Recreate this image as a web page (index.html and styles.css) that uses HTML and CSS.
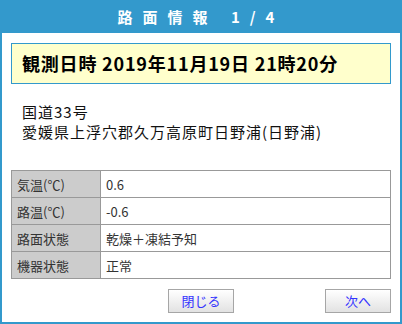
FILE: index.html
```html
<!DOCTYPE html>
<html lang="ja">
<head>
<meta charset="utf-8">
<link rel="stylesheet" href="styles.css">
</head>
<body>
<div class="panel">
  <div class="title">路面情報 1/4</div>
  <div class="content">
    <div class="obs">観測日時 2019年11月19日 21時20分</div>
    <div class="addr">国道33号<br>愛媛県上浮穴郡久万高原町日野浦(日野浦)</div>
    <table class="data">
      <tr><th>気温(℃)</th><td>0.6</td></tr>
      <tr><th>路温(℃)</th><td>-0.6</td></tr>
      <tr><th>路面状態</th><td>乾燥＋凍結予知</td></tr>
      <tr><th>機器状態</th><td>正常</td></tr>
    </table>
    <div class="actions">
      <button class="btn btn-close">閉じる</button>
      <button class="btn btn-next">次へ</button>
    </div>
  </div>
</div>
</body>
</html>
```
FILE: styles.css
```css
html, body {
  margin: 0;
  padding: 0;
  background: #fff;
}
body {
  font-family: "Noto Sans CJK JP", "Noto Sans", sans-serif;
  color: #000;
}
.panel {
  width: 402px;
  height: 324px;
  box-sizing: border-box;
  border: 2px solid #3399cc;
  border-top: 0;
  display: flex;
  flex-direction: column;
}
.title {
  height: 33px;
  margin: 0 -2px;
  background: #3399cc;
  color: #fff;
  font-weight: bold;
  font-size: 15px;
  letter-spacing: 10px;
  line-height: 33px;
  text-align: center;
}
.content {
  padding: 10px 9px 0 9px;
  display: flex;
  flex-direction: column;
}
.obs {
  height: 39px;
  border: 1px solid #3399cc;
  background: #ffffcc;
  font-size: 18px;
  font-weight: bold;
  letter-spacing: 0.8px;
  line-height: 39px;
  padding-left: 10px;
}
.addr {
  margin-top: 18px;
  padding-left: 11px;
  font-size: 15px;
  letter-spacing: 1px;
  line-height: 20px;
  color: #111;
}
.data {
  margin-top: 28px;
  width: 100%;
  border-collapse: collapse;
  font-size: 13px;
  color: #333;
}
.data th, .data td {
  border: 1px solid #999;
  height: 26px;
  padding: 0 0 0 5px;
  text-align: left;
  font-weight: normal;
}
.data th {
  width: 83px;
  background: #cccccc;
}
.data td {
  background: #fff;
}
.actions {
  margin-top: 10px;
  display: grid;
  grid-template-columns: 1fr auto 1fr;
  align-items: center;
}
.btn {
  width: 66px;
  height: 24px;
  border: 1px solid #a6a6a6;
  background: linear-gradient(#ffffff, #e2e2e2);
  color: #3333ff;
  font-family: "Noto Sans CJK JP", sans-serif;
  font-size: 13px;
  line-height: 20px;
  padding: 0;
}
.btn-close {
  grid-column: 2;
}
.btn-next {
  grid-column: 3;
  justify-self: end;
}
```
